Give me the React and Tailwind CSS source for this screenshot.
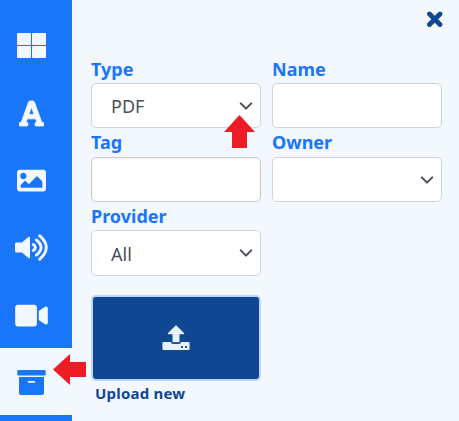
import React from "react";
import { FaFont, FaImage, FaVideo } from "react-icons/fa";

function GridIcon({ className }) {
  return (
    <svg viewBox="0 0 29 25" className={className} fill="currentColor">
      <rect x="0" y="0" width="14" height="12" rx="1" />
      <rect x="15" y="0" width="14" height="12" rx="1" />
      <rect x="0" y="13" width="14" height="12" rx="1" />
      <rect x="15" y="13" width="14" height="12" rx="1" />
    </svg>
  );
}

function LetterIcon({ className }) {
  return <FaFont className={className} stroke="currentColor" strokeWidth="14" />;
}

function SpeakerIcon({ className }) {
  return (
    <svg viewBox="0 0 33 29" className={className} fill="none" stroke="currentColor" strokeWidth="2.9" strokeLinecap="round">
      <path d="M1.5 9.5H7L13.3 4Q15 3 15 5V24Q15 26 13.3 25L7 19.5H1.5Q0 19.5 0 18V11Q0 9.5 1.5 9.5Z" fill="currentColor" stroke="none" />
      <path d="M18.3 11.5Q22.6 14.5 18.3 17.5" />
      <path d="M21.4 7Q30.8 14.5 21.4 22" />
      <path d="M24.6 2.7Q38 14.5 24.6 26.3" />
    </svg>
  );
}

function ArchiveIcon({ className }) {
  return (
    <svg viewBox="0 0 29 25" className={className} fill="currentColor">
      <rect x="0.3" y="0" width="28.4" height="5.5" rx="1.3" />
      <path fillRule="evenodd" d="M2 7H27V23Q27 25 25 25H4Q2 25 2 23ZM11.6 10.9Q10.8 10.9 10.8 11.8T11.6 12.7H17.4Q18.2 12.7 18.2 11.8T17.4 10.9Z" />
    </svg>
  );
}

function UploadIcon({ className }) {
  return (
    <svg viewBox="0 0 28 26" className={className} fill="currentColor">
      <path d="M13.3 0.7Q14 0 14.7 0.7L22 8Q22.8 9.2 21.5 9.3H17.5V16.3Q17.5 17.3 16.5 17.3H11.5Q10.5 17.3 10.5 16.3V9.3H6.5Q5.2 9.2 6 8Z" />
      <path fillRule="evenodd" d="M1.7 17H8.9Q9.2 18.9 11.2 18.9H16.8Q18.8 18.9 19.1 17H26.3Q27.6 17 27.6 18.3V23.7Q27.6 25 26.3 25H1.7Q0.4 25 0.4 23.7V18.3Q0.4 17 1.7 17ZM19.1 21.1V22.9H20.9V21.1ZM23.1 21.1V22.9H24.9V21.1Z" />
    </svg>
  );
}

function CloseIcon({ className }) {
  return (
    <svg viewBox="0 0 17 17" className={className} stroke="currentColor" strokeWidth="4.8" strokeLinecap="round">
      <path d="M3.5 3L14 13.5M14 3L3.5 13.5" />
    </svg>
  );
}

const items = [
  { Icon: GridIcon, size: "w-[29px] h-[25px]" },
  { Icon: LetterIcon, size: "w-[25px] h-[29px]" },
  { Icon: FaImage, size: "w-[29px] h-[29px]" },
  { Icon: SpeakerIcon, size: "w-[33px] h-[29px]" },
  { Icon: FaVideo, size: "w-[33px] h-[29px]" },
  { Icon: ArchiveIcon, size: "w-[29px] h-[25px]", active: true },
];

function Chevron() {
  return (
    <svg viewBox="0 0 16 16" className="size-[14px] shrink-0" fill="none" stroke="#495057" strokeWidth="2.4" strokeLinecap="round" strokeLinejoin="round">
      <path d="M2 5l6 6 6-6" />
    </svg>
  );
}

function Field({ label, value = "", select = false, inset = false, labelBox = "h-[28px] leading-[28px]", height = "h-[45px]" }) {
  return (
    <div className="w-[170px]">
      <div className={`text-[18px] font-bold text-[#1976f9] ${labelBox}`}>{label}</div>
      <div
        className={`flex items-center justify-between rounded-[5px] border bg-white pl-[19px] pr-[7px] ${height} ${inset ? "border-[#c9cbce] shadow-[inset_0_1px_2px_rgba(0,0,0,0.08)]" : "border-[#ced4da]"}`}
      >
        <span className="pt-px text-[18px] leading-[24px] text-[#495057]">{value}</span>
        {select && <Chevron />}
      </div>
    </div>
  );
}

export default function App() {
  return (
    <div className="relative flex h-[421px] w-[459px] overflow-hidden bg-[#f3f8ff] font-['Noto_Sans','Open_Sans',sans-serif]">
      <nav className="flex w-[72px] shrink-0 flex-col bg-[#1976f9] pt-[11px]">
        {items.map(({ Icon, size, active }, i) => (
          <button
            key={i}
            className={`flex h-[67.4px] shrink-0 items-center justify-center pr-[9px] pt-[2px] ${active ? "bg-[#f3f8ff] text-[#1976f9]" : "text-[#f3f8ff]"}`}
          >
            <Icon className={size} />
          </button>
        ))}
      </nav>
      <main className="flex flex-1 flex-col pl-[19px] pr-[16px]">
        <div className="flex h-[55px] justify-end pt-[11px]">
          <CloseIcon className="size-[17px] text-[#0f4792]" />
        </div>
        <div className="grid grid-cols-[170px_170px] gap-x-[11px]">
          <Field label="Type" value="PDF" select />
          <Field label="Name" />
          <Field label="Tag" inset labelBox="h-[29px] leading-[28px]" />
          <Field label="Owner" select labelBox="h-[29px] leading-[28px]" />
          <Field label="Provider" value="All" select height="h-[46px]" />
        </div>
        <button className="mt-[19px] flex h-[86px] w-[170px] items-center justify-center rounded-[5px] border-2 border-[#b9d5fb] bg-[#0f4792] text-[#e8f1fe]">
          <UploadIcon className="h-[26px] w-[28px]" />
        </button>
        <div className="pl-[4px] pt-px text-[15px] leading-[22px] font-bold tracking-[0.2px] text-[#0f4792]">Upload new</div>
      </main>
      <svg className="absolute left-[224px] top-[115px] h-[33px] w-[31px]" viewBox="0 0 31 33" fill="#ee1c24">
        <path d="M15.5 0L31 17H23V33H8V17H0Z" />
      </svg>
      <svg className="absolute left-[53px] top-[354px] h-[31px] w-[33px]" viewBox="0 0 33 31" fill="#ee1c24">
        <path d="M0 15.5L17 0V8H33V23H17V31Z" />
      </svg>
    </div>
  );
}
